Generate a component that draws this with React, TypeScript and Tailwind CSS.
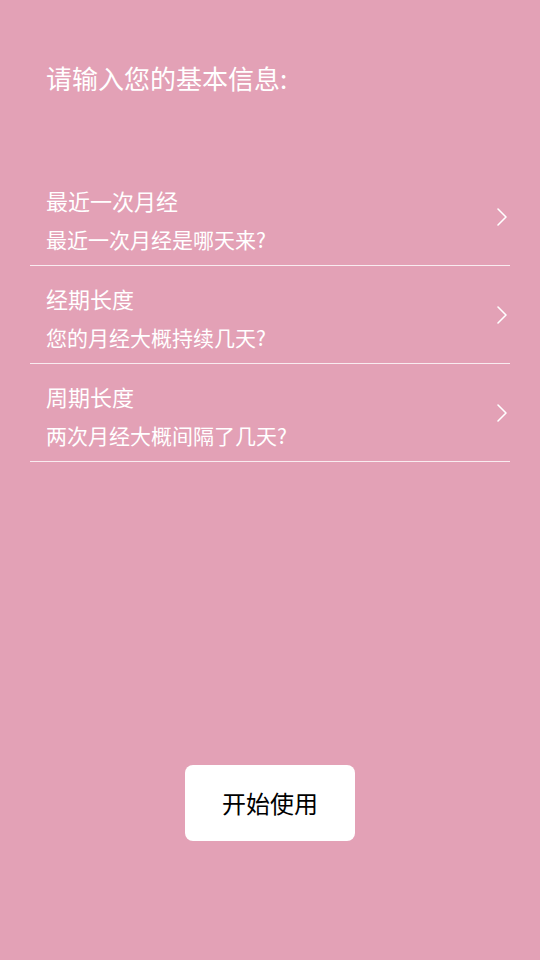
const rows = [
  { title: '最近一次月经', sub: '最近一次月经是哪天来?' },
  { title: '经期长度', sub: '您的月经大概持续几天?' },
  { title: '周期长度', sub: '两次月经大概间隔了几天?' },
]

function Chevron() {
  return (
    <svg width="12" height="20" viewBox="0 0 12 20" fill="none" className="shrink-0 -mt-[6px]">
      <path d="M2 2 L10 10 L2 18" stroke="white" strokeWidth="1.6" strokeLinecap="round" strokeLinejoin="round" />
    </svg>
  )
}

export default function App() {
  return (
    <div
      className="w-[540px] h-[960px] bg-[#e3a1b6] text-white flex flex-col"
      style={{ fontFamily: '"Noto Sans CJK SC", "Noto Sans", sans-serif' }}
    >
      <h1 className="pt-[61px] pl-[46px] text-[26px] leading-[34px] font-normal">请输入您的基本信息:</h1>

      <div className="mt-[73px] px-[30px]">
        {rows.map((r) => (
          <div key={r.title} className="flex items-center justify-between border-b border-white/80 pl-[16px] pr-[2px] pt-[19px] pb-[13px]">
            <div className="flex flex-col">
              <span className="text-[22px] leading-[26px] font-normal">{r.title}</span>
              <span className="mt-[13px] text-[21px] leading-[26px] font-normal">{r.sub}</span>
            </div>
            <Chevron />
          </div>
        ))}
      </div>

      <div className="mt-[303px] flex justify-center">
        <button className="w-[170px] h-[76px] bg-white rounded-[8px] text-black text-[24px]">开始使用</button>
      </div>
    </div>
  )
}
